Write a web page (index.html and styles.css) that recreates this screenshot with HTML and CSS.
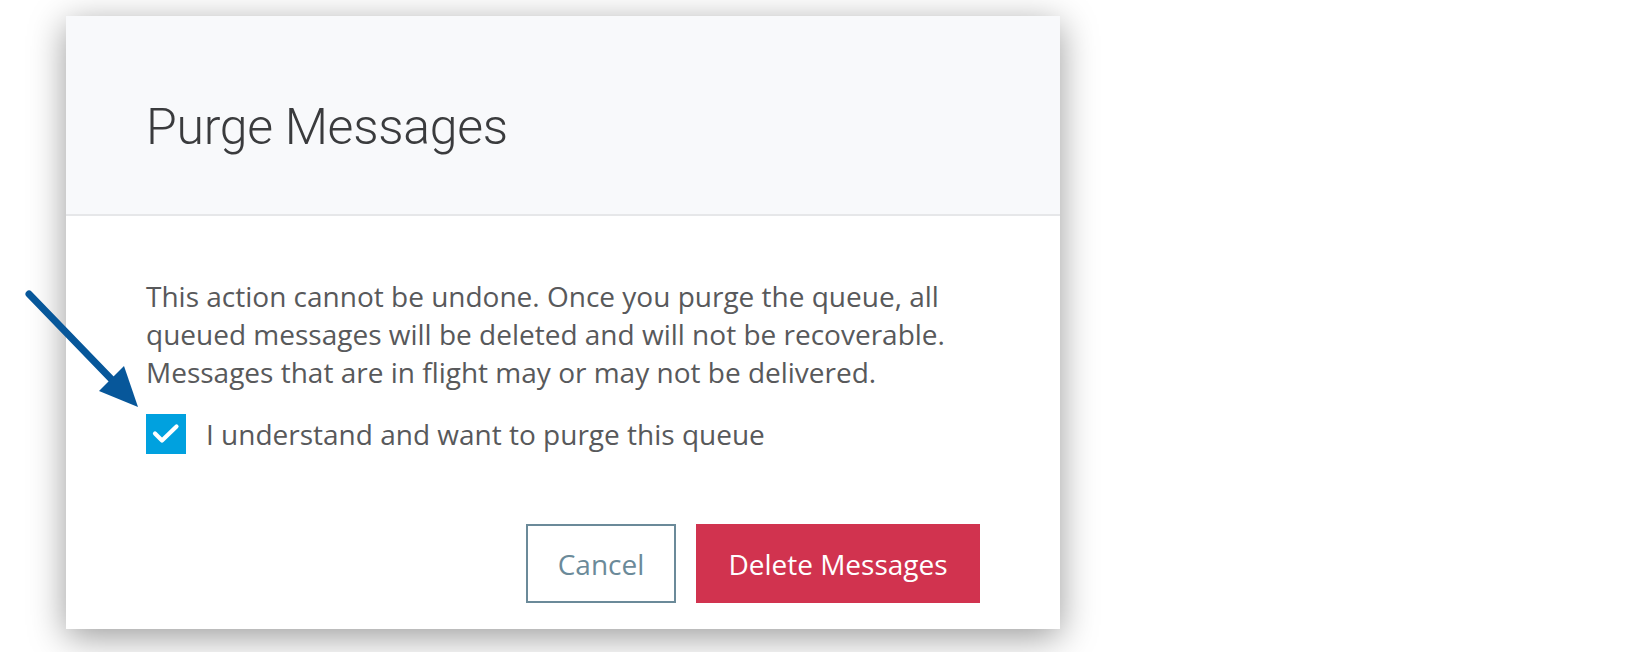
FILE: index.html
```html
<!DOCTYPE html>
<html>
<head>
<meta charset="utf-8">
<title>Purge Messages</title>
<link rel="stylesheet" href="styles.css">
</head>
<body>
<div class="dialog">
  <div class="dialog-header">
    <h1 class="dialog-title">Purge Messages</h1>
  </div>
  <div class="dialog-body">
    <p class="dialog-text">This action cannot be undone. Once you purge the queue, all queued messages will be deleted and will not be recoverable. Messages that are in flight may or may not be delivered.</p>
    <label class="confirm-row">
      <span class="checkbox">
        <svg viewBox="0 0 40 40" width="40" height="40"><path d="M9 19.5 L16 26.5 L30.5 12.5" fill="none" stroke="#fff" stroke-width="4.2" stroke-linecap="round" stroke-linejoin="round"/></svg>
      </span>
      <span class="confirm-label">I understand and want to purge this queue</span>
    </label>
    <div class="dialog-actions">
      <button class="btn btn-cancel">Cancel</button>
      <button class="btn btn-danger">Delete Messages</button>
    </div>
  </div>
</div>
<svg class="annotation-arrow" viewBox="0 0 160 420" width="160" height="420">
  <line x1="29" y1="294" x2="116" y2="384" stroke="#07579a" stroke-width="7" stroke-linecap="round"/>
  <polygon points="138,407 99,391 124,366" fill="#07579a"/>
</svg>
</body>
</html>
```

FILE: styles.css
```css
html, body {
  margin: 0;
  padding: 0;
  background: #ffffff;
}

body {
  position: relative;
  width: 1634px;
  height: 652px;
  overflow: hidden;
  font-family: "Open Sans", "Noto Sans", sans-serif;
}

.dialog {
  width: 994px;
  margin: 16px 0 0 66px;
  background: #ffffff;
  box-shadow: 0 8px 34px rgba(0, 0, 0, 0.4);
}

.dialog-header {
  box-sizing: border-box;
  height: 200px;
  padding: 86px 80px 0;
  background: #f8f9fb;
  border-bottom: 2px solid #e6e7e9;
}

.dialog-title {
  margin: 0;
  font-family: Roboto, "Liberation Sans", sans-serif;
  font-weight: 300;
  font-size: 50px;
  line-height: 50px;
  letter-spacing: -0.3px;
  color: #3a3b3d;
}

.dialog-body {
  padding: 61px 80px 26px;
}

.dialog-text {
  margin: 0;
  font-size: 28px;
  line-height: 38px;
  color: #58595b;
}

.confirm-row {
  display: flex;
  align-items: center;
  gap: 20px;
  margin-top: 23px;
}

.checkbox {
  display: flex;
  width: 40px;
  height: 40px;
  background: #00a1df;
}

.confirm-label {
  font-size: 28px;
  line-height: 38px;
  color: #58595b;
}

.dialog-actions {
  display: flex;
  justify-content: flex-end;
  gap: 20px;
  margin-top: 70px;
}

.btn {
  box-sizing: border-box;
  height: 79px;
  margin: 0;
  font-family: "Open Sans", "Noto Sans", sans-serif;
  font-size: 28px;
  border-radius: 0;
  cursor: pointer;
}

.btn-cancel {
  width: 150px;
  background: #ffffff;
  border: 2px solid #6b8a99;
  color: #6b8a99;
}

.btn-danger {
  width: 284px;
  background: #d1334f;
  border: none;
  color: #ffffff;
}

.annotation-arrow {
  position: absolute;
  left: 0;
  top: 0;
  pointer-events: none;
}
```
